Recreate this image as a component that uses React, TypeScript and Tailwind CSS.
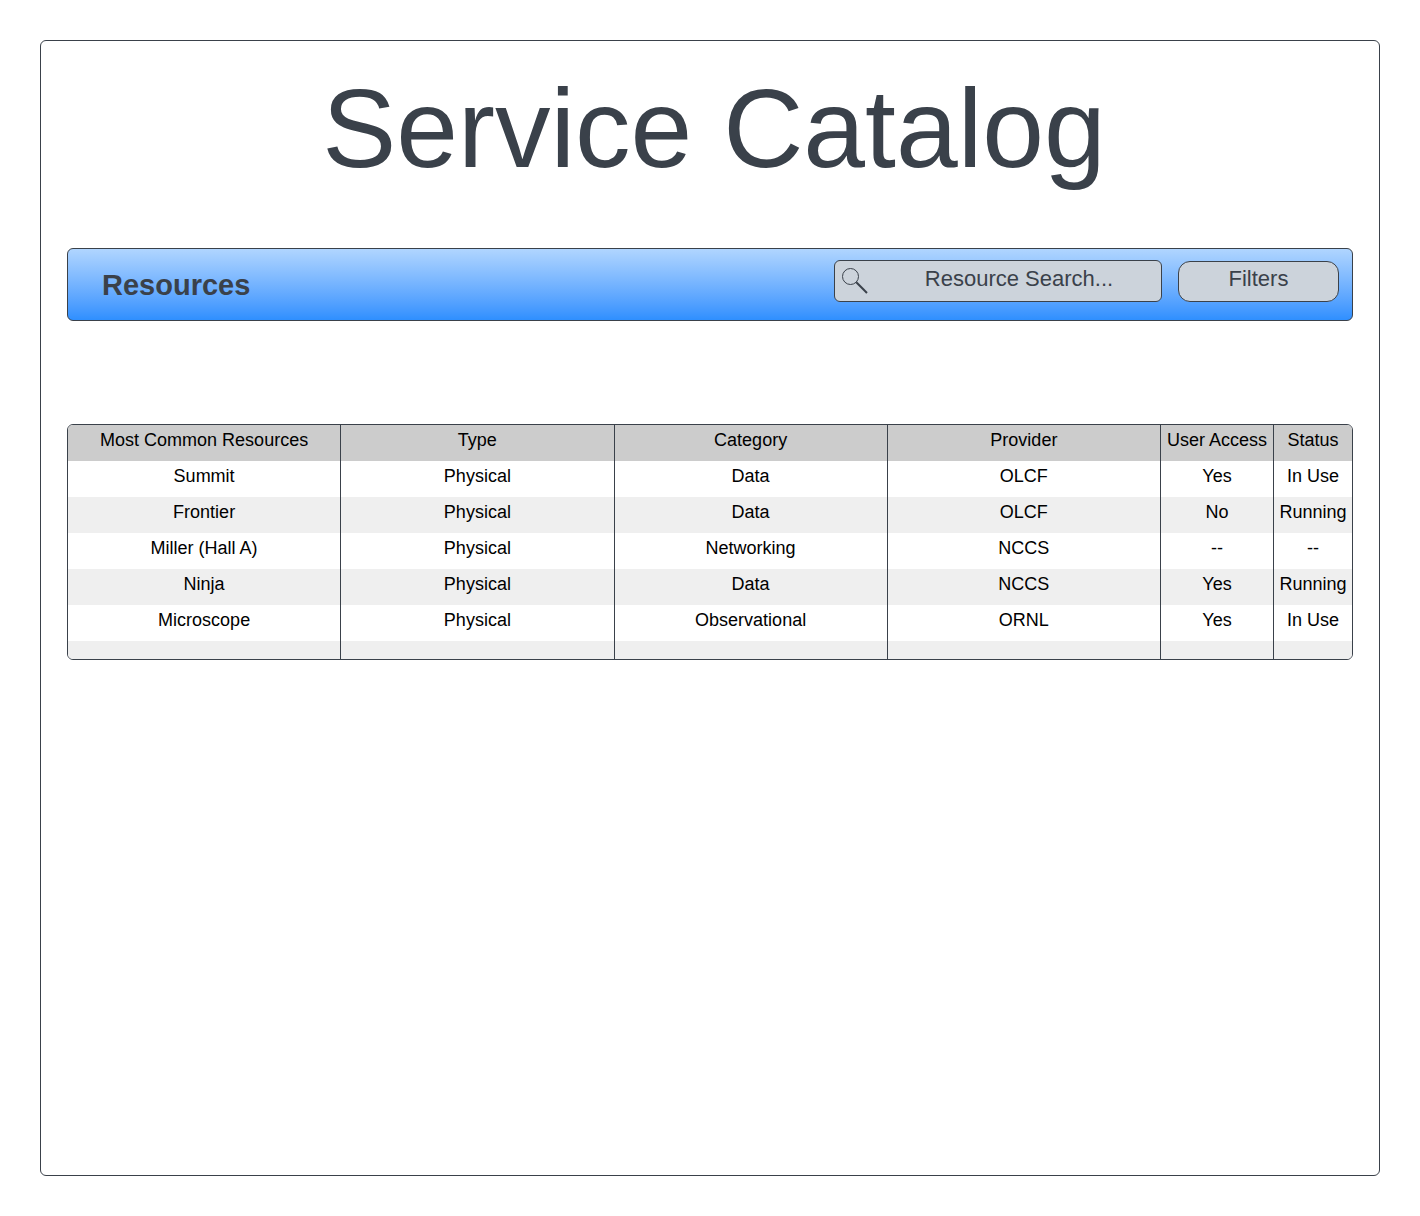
const columns = ["Most Common Resources", "Type", "Category", "Provider", "User Access", "Status"];

const rows = [
  ["Summit", "Physical", "Data", "OLCF", "Yes", "In Use"],
  ["Frontier", "Physical", "Data", "OLCF", "No", "Running"],
  ["Miller (Hall A)", "Physical", "Networking", "NCCS", "--", "--"],
  ["Ninja", "Physical", "Data", "NCCS", "Yes", "Running"],
  ["Microscope", "Physical", "Observational", "ORNL", "Yes", "In Use"],
];

function SearchIcon() {
  return (
    <svg
      className="pointer-events-none absolute left-2 top-2 size-[26px]"
      viewBox="0 0 26 26"
      fill="none"
      stroke="#3a414a"
      aria-hidden="true"
    >
      <circle cx="8.5" cy="8.5" r="8" strokeWidth="1" />
      <path d="M14.3 14.3 25 25" strokeWidth="2" />
    </svg>
  );
}

function Toolbar() {
  return (
    <section className="mt-[63px] flex items-start justify-between rounded-md border border-[#3a414a] bg-linear-to-b from-[#b0d5ff] to-[#2e8fff] pt-[11px] pr-[13px] pb-[18px] pl-[34px]">
      <h2 className="pt-2 text-[29px] leading-[34px] font-bold">Resources</h2>
      <div className="flex items-end gap-4">
        <div className="relative">
          <SearchIcon />
          <input
            type="text"
            role="searchbox"
            aria-label="Resource search"
            placeholder="Resource Search..."
            className="block h-[42px] w-[328px] rounded-md border border-[#3a414a] bg-[#ccd3db] pr-1 pb-1 pl-[46px] text-center text-[22px] placeholder:text-[#3a414a] placeholder:opacity-100"
          />
        </div>
        <button
          type="button"
          className="h-[41px] w-[161px] rounded-xl border border-[#3a414a] bg-[#ccd3db] pb-1.5 text-[22px]"
        >
          Filters
        </button>
      </div>
    </section>
  );
}

function ResourceTable() {
  return (
    <div className="mt-[103px] overflow-hidden rounded-md border border-[#3a414a]">
      <table className="w-full table-fixed border-separate border-spacing-0 text-center text-[18px] leading-[30px] text-black">
        <colgroup>
          <col />
          <col />
          <col />
          <col />
          <col className="w-[113px]" />
          <col className="w-[78px]" />
        </colgroup>
        <thead>
          <tr className="bg-[#cccccc]">
            {columns.map((name) => (
              <th
                key={name}
                scope="col"
                className="border-r border-[#3a414a] pb-1.5 font-normal whitespace-nowrap last:border-r-0"
              >
                {name}
              </th>
            ))}
          </tr>
        </thead>
        <tbody>
          {rows.map((row) => (
            <tr key={row[0]} className="bg-white even:bg-[#efefef]">
              {row.map((cell, i) => (
                <td key={columns[i]} className="border-r border-[#3a414a] pb-1.5 whitespace-nowrap last:border-r-0">
                  {cell}
                </td>
              ))}
            </tr>
          ))}
          <tr className="bg-[#efefef]">
            {columns.map((name) => (
              <td key={name} className="h-[18px] border-r border-[#3a414a] last:border-r-0" />
            ))}
          </tr>
        </tbody>
      </table>
    </div>
  );
}

export default function App() {
  return (
    <div className="flex min-h-screen bg-white p-10 font-['Liberation_Sans',Arial,sans-serif] text-[#3a414a]">
      <main className="min-w-0 flex-1 rounded-md border border-[#3a414a] px-[26px] pt-8">
        <h1 className="pl-2 text-center text-[111px] leading-[112px]">Service Catalog</h1>
        <Toolbar />
        <ResourceTable />
      </main>
    </div>
  );
}
